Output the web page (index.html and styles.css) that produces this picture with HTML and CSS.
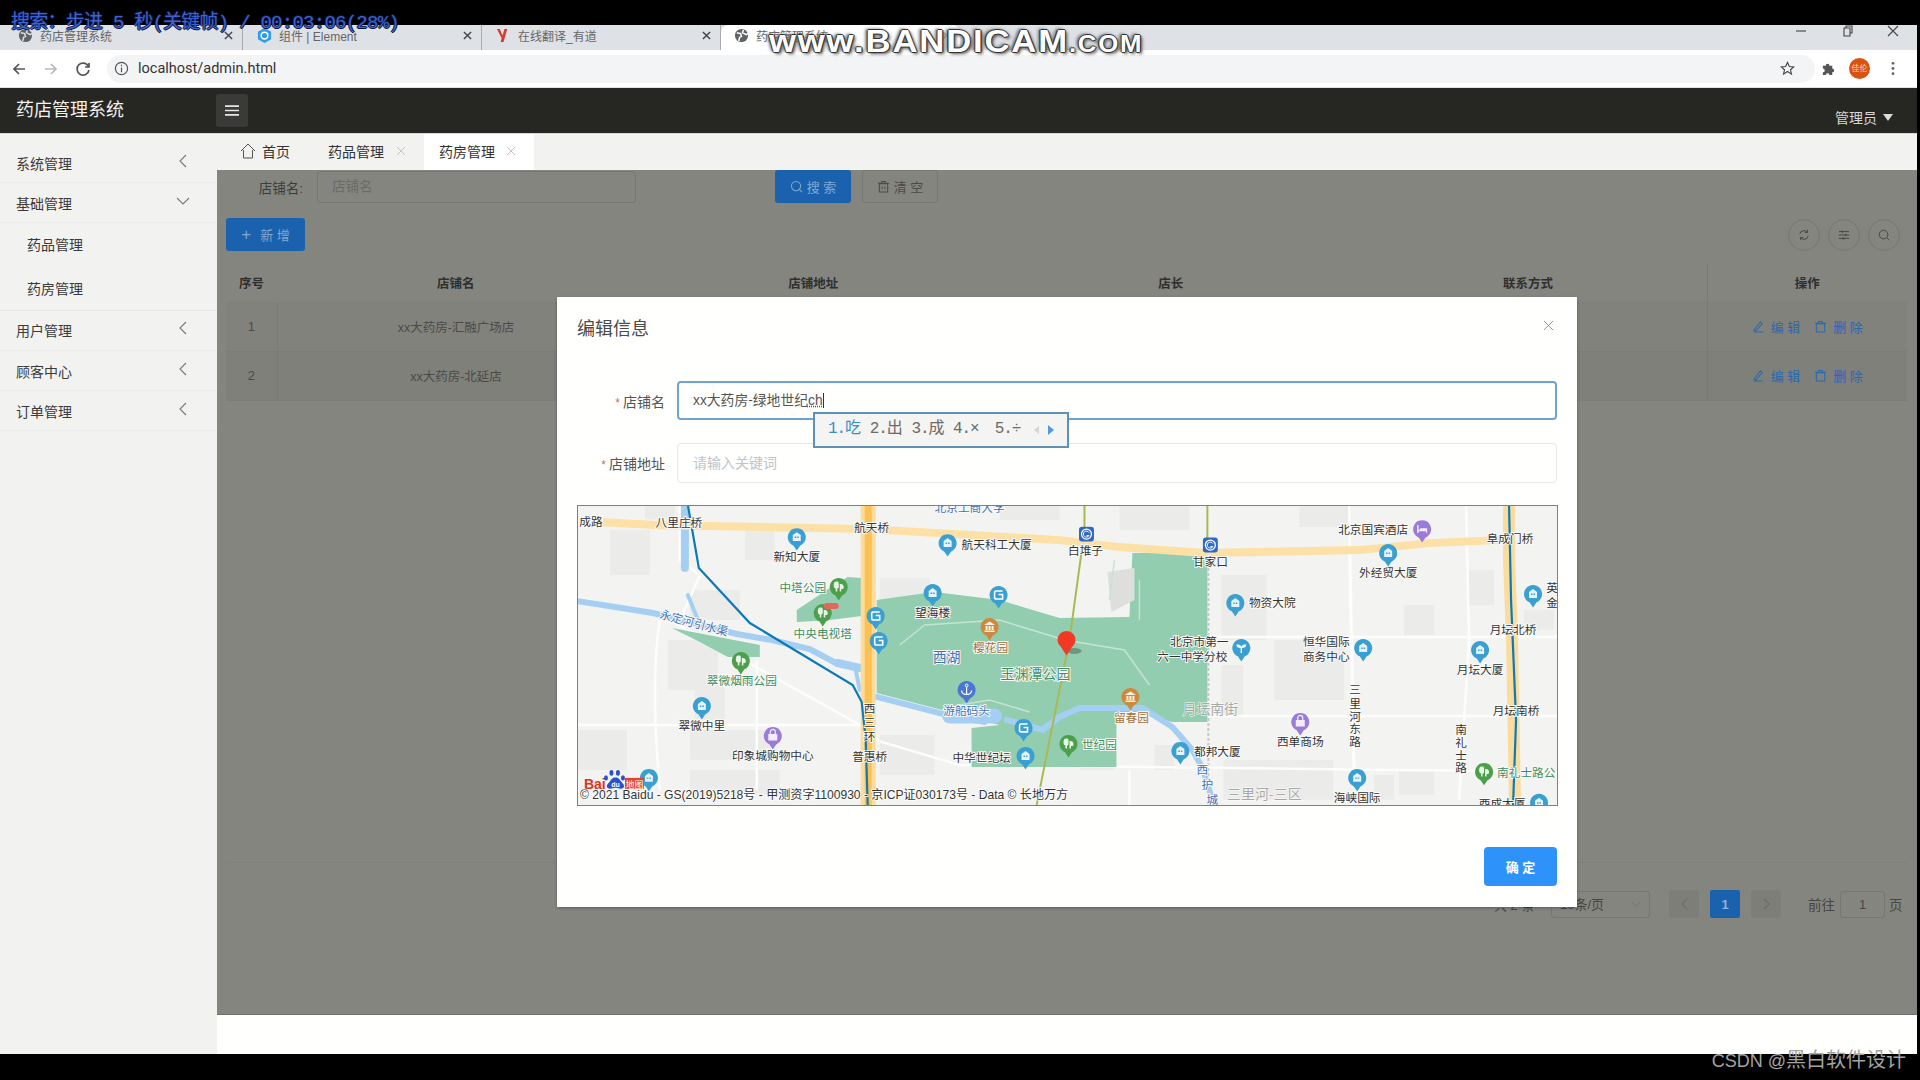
FILE: index.html
```html
<!DOCTYPE html>
<html lang="zh-CN">
<head>
<meta charset="utf-8">
<title>药店管理系统</title>
<link rel="stylesheet" href="styles.css">
</head>
<body>
<div class="osd">搜索：步进 5 秒(关键帧) / 00:03:06(28%)</div>
<div class="watermark">www.BANDICAM<span class="wm-small">.com</span></div>

<div class="window">
  <div class="tabstrip">
    <div class="ctab"><svg class="fav" viewBox="0 0 16 16"><circle cx="8" cy="8" r="7" fill="#5f6368"/><path d="M3 5l4 1 1 3-2 1-1 4M10 2l-1 3 4 2 2-1" fill="none" stroke="#dee1e6" stroke-width="1.6"/></svg><span class="ctab-title">药店管理系统</span><svg class="ctab-x" viewBox="0 0 10 10"><path d="M1 1l8 8M9 1l-8 8"/></svg></div>
    <div class="ctab"><svg class="fav" viewBox="0 0 16 16"><path d="M8 0l7 4v8l-7 4-7-4V4z" fill="#2f9bea"/><circle cx="8" cy="8" r="3.6" fill="none" stroke="#fff" stroke-width="1.6"/></svg><span class="ctab-title">组件 | Element</span><svg class="ctab-x" viewBox="0 0 10 10"><path d="M1 1l8 8M9 1l-8 8"/></svg></div>
    <div class="ctab"><svg class="fav" viewBox="0 0 16 16"><path d="M4 1l3 7 2-7h3L8 15H5l1-4-5-10z" fill="#d83a2e"/></svg><span class="ctab-title">在线翻译_有道</span><svg class="ctab-x" viewBox="0 0 10 10"><path d="M1 1l8 8M9 1l-8 8"/></svg></div>
    <div class="ctab ctab-active"><svg class="fav" viewBox="0 0 16 16"><circle cx="8" cy="8" r="7" fill="#5f6368"/><path d="M3 5l4 1 1 3-2 1-1 4M10 2l-1 3 4 2 2-1" fill="none" stroke="#fff" stroke-width="1.6"/></svg><span class="ctab-title">药店管理系统</span><svg class="ctab-x" viewBox="0 0 10 10"><path d="M1 1l8 8M9 1l-8 8"/></svg></div>
    <div class="winctl">
      <svg viewBox="0 0 12 12"><path d="M1 6h10"/></svg>
      <svg viewBox="0 0 12 12"><path d="M3 3h6v8H3zM5 3V1h6v7H9"/></svg>
      <svg viewBox="0 0 12 12"><path d="M1 1l10 10M11 1L1 11"/></svg>
    </div>
  </div>

  <div class="addrbar">
    <svg class="nav" viewBox="0 0 16 16"><path d="M14 8H3M8 3L3 8l5 5"/></svg>
    <svg class="nav nav-off" viewBox="0 0 16 16"><path d="M2 8h11M8 3l5 5-5 5"/></svg>
    <svg class="nav" viewBox="0 0 16 16"><path d="M13.5 5.5A6 6 0 1 0 14 9M14 2v4h-4"/></svg>
    <div class="omni">
      <svg class="info" viewBox="0 0 16 16"><circle cx="8" cy="8" r="6.5"/><path d="M8 7v5M8 4v1.6"/></svg>
      <span class="url">localhost/admin.html</span>
      <svg class="star" viewBox="0 0 16 16"><path d="M8 1.5l2 4.3 4.6.5-3.4 3.1 1 4.6L8 11.2l-4.2 2.8 1-4.6L1.400 6.300 6 5.800z"/></svg>
    </div>
    <div class="addr-right">
      <svg class="puzzle" viewBox="0 0 16 16"><path d="M2 5h3a2 2 0 1 1 4 0h3v3a2 2 0 1 1 0 4v3H9a2 2 0 1 0-4 0H2v-3a2 2 0 1 0 0-4z"/></svg>
      <div class="avatar">佳伦</div>
      <svg class="dots" viewBox="0 0 4 16"><circle cx="2" cy="2.500" r="1.500"/><circle cx="2" cy="8" r="1.500"/><circle cx="2" cy="13.500" r="1.500"/></svg>
    </div>
  </div>

  <header class="apphead">
    <div class="brand">药店管理系统</div>
    <button class="burger"><svg viewBox="0 0 16 12"><path d="M0 1h16M0 6h16M0 11h16"/></svg></button>
    <div class="user">管理员<span class="caret"></span></div>
  </header>

  <div class="appbody">
    <aside class="sidebar">
      <div class="sb-row"><span>系统管理</span><svg class="chev" viewBox="0 0 8 14"><path d="M7 1L1 7l6 6"/></svg></div>
      <div class="sb-row"><span>基础管理</span><svg class="chev chev-d" viewBox="0 0 14 8"><path d="M1 1l6 6 6-6"/></svg></div>
      <div class="sb-row sb-sub"><span>药品管理</span></div>
      <div class="sb-row sb-sub"><span>药房管理</span></div>
      <div class="sb-row"><span>用户管理</span><svg class="chev" viewBox="0 0 8 14"><path d="M7 1L1 7l6 6"/></svg></div>
      <div class="sb-row"><span>顾客中心</span><svg class="chev" viewBox="0 0 8 14"><path d="M7 1L1 7l6 6"/></svg></div>
      <div class="sb-row"><span>订单管理</span><svg class="chev" viewBox="0 0 8 14"><path d="M7 1L1 7l6 6"/></svg></div>
    </aside>

    <main class="main">
      <nav class="pagetabs">
        <div class="ptab ptab-home"><svg class="home" viewBox="0 0 16 16"><path d="M1 8l7-7 7 7M3.500 7v8h9V7"/></svg>首页</div>
        <div class="ptab">药品管理<svg class="ptab-x" viewBox="0 0 10 10"><path d="M1 1l8 8M9 1l-8 8"/></svg></div>
        <div class="ptab ptab-active">药房管理<svg class="ptab-x" viewBox="0 0 10 10"><path d="M1 1l8 8M9 1l-8 8"/></svg></div>
      </nav>

      <section class="content">
        <form class="searchrow">
          <label class="s-label">店铺名:</label>
          <div class="s-input">店铺名</div>
          <div class="btn btn-primary btn-search"><svg class="ico" viewBox="0 0 14 14"><circle cx="6.500" cy="6.500" r="5"/><path d="M10 10l3 3"/></svg>搜 索</div>
          <div class="btn btn-plain"><svg class="ico" viewBox="0 0 14 14"><path d="M2.500 4h9v9h-9zM1 3.500h12M5 3.500V1.500h4v2M5.500 7v3M8.500 7v3"/></svg>清 空</div>
        </form>

        <div class="toolbar">
          <div class="btn btn-primary btn-add"><span class="plus">+</span>新 增</div>
          <div class="circles">
            <div class="circle"><svg viewBox="0 0 14 14"><path d="M2 6a5 5 0 0 1 9-2M12 8a5 5 0 0 1-9 2M11 1v3H8M3 13v-3h3"/></svg></div>
            <div class="circle"><svg viewBox="0 0 14 14"><path d="M1 3h12M1 7h12M1 11h12M5 1.500v3M9 5.500v3M6 9.500v3"/></svg></div>
            <div class="circle"><svg viewBox="0 0 14 14"><circle cx="6.500" cy="6.500" r="5"/><path d="M10 10l3 3"/></svg></div>
          </div>
        </div>

        <div class="tablewrap">
          <table class="grid">
            <colgroup><col class="c-no"><col class="c-w"><col class="c-w"><col class="c-w"><col class="c-w"><col class="c-op"></colgroup>
            <thead>
              <tr><th>序号</th><th>店铺名</th><th>店铺地址</th><th>店长</th><th>联系方式</th><th class="op">操作</th></tr>
            </thead>
            <tbody>
              <tr><td>1</td><td>xx大药房-汇融广场店</td><td></td><td></td><td></td>
                <td class="op"><span class="link"><svg class="ico" viewBox="0 0 14 14"><path d="M2 11L9 2l2 2-7 8zM2 13h10"/></svg>编 辑</span><span class="link"><svg class="ico" viewBox="0 0 14 14"><path d="M2.500 4h9v9h-9zM1 3.500h12M5 3.500V1.500h4v2"/></svg>删 除</span></td></tr>
              <tr><td>2</td><td>xx大药房-北延店</td><td></td><td></td><td></td>
                <td class="op"><span class="link"><svg class="ico" viewBox="0 0 14 14"><path d="M2 11L9 2l2 2-7 8zM2 13h10"/></svg>编 辑</span><span class="link"><svg class="ico" viewBox="0 0 14 14"><path d="M2.500 4h9v9h-9zM1 3.500h12M5 3.500V1.500h4v2"/></svg>删 除</span></td></tr>
            </tbody>
          </table>
        </div>

        <div class="pager">
          <span class="pg-total">共 2 条</span>
          <div class="pg-size">10条/页<svg class="pg-chev" viewBox="0 0 14 8"><path d="M1 1l6 6 6-6"/></svg></div>
          <div class="pg-btn"><svg viewBox="0 0 8 14"><path d="M7 1L1 7l6 6"/></svg></div>
          <div class="pg-btn pg-on">1</div>
          <div class="pg-btn"><svg viewBox="0 0 8 14"><path d="M1 1l6 6-6 6"/></svg></div>
          <span class="pg-go">前往</span>
          <div class="pg-input">1</div>
          <span class="pg-unit">页</span>
        </div>

        <div class="dialog">
          <div class="dlg-head">
            <span class="dlg-title">编辑信息</span>
            <svg class="dlg-x" viewBox="0 0 12 12"><path d="M1 1l10 10M11 1L1 11"/></svg>
          </div>
          <div class="f-item">
            <label class="f-label"><i class="req">*</i>店铺名</label>
            <div class="f-input f-focus">xx大药房-绿地世纪<u class="compose">ch</u><span class="caretline"></span></div>
            <div class="ime">
              <span class="ime-c ime-first">1.吃</span><span class="ime-c">2.出</span><span class="ime-c">3.成</span><span class="ime-c">4.×</span><span class="ime-c">5.÷</span>
              <i class="ime-l"></i><i class="ime-r"></i>
            </div>
          </div>
          <div class="f-item">
            <label class="f-label"><i class="req">*</i>店铺地址</label>
            <div class="f-input f-ph">请输入关键词</div>
          </div>

          <div class="map">
            <svg class="mapsvg" viewBox="577 505 982 301">
              <defs>
                <symbol id="pb" viewBox="0 0 20 24"><path d="M10 23.500L6.500 18.300A9 9 0 1 1 13.500 18.300Z"/><path d="M6 14V8l4-3 4 3v6z" fill="#e6f3fa"/><path d="M8 9.500h1.500V11H8zM10.500 9.500H12V11h-1.500z" fill="#3a9fd1"/></symbol>
                <symbol id="pm" viewBox="0 0 20 24"><path d="M10 23.500L6.500 18.300A9 9 0 1 1 13.500 18.300Z"/><path d="M14 6H7.500A1.500 1.500 0 0 0 6 7.500v5A1.500 1.500 0 0 0 7.500 14H14v-4.500h-4" fill="none" stroke="#fff" stroke-width="1.600"/></symbol>
                <symbol id="pg" viewBox="0 0 20 24"><path d="M10 23.500L6.500 18.300A9 9 0 1 1 13.500 18.300Z"/><path d="M7.500 4.500c-2 0-2.500 2-2.500 4s1 3 2 3v3h1.500v-3c.5 0 1.500-.5 1.500-1.500V6c0-1-1-1.500-2.500-1.500zM11 7c2 0 4 .5 4 3s-1.500 2-2.500 2v2.500H11z" fill="#e8f5e6"/></symbol>
                <symbol id="ps" viewBox="0 0 20 24"><path d="M10 23.500L6.500 18.300A9 9 0 1 1 13.500 18.300Z"/><path d="M5.500 8h9v6.500h-9z" fill="#f3edfb"/><path d="M7.500 8V6a2.500 2.500 0 0 1 5 0v2" fill="none" stroke="#f3edfb" stroke-width="1.200"/></symbol>
                <symbol id="ph" viewBox="0 0 20 24"><path d="M10 23.500L6.500 18.300A9 9 0 1 1 13.500 18.300Z"/><path d="M5 6v8h1.500v-2h7.500v2H15V9H8v1.500H6.500V6z" fill="#f3edfb"/></symbol>
                <symbol id="pt" viewBox="0 0 20 24"><path d="M10 23.500L6.500 18.300A9 9 0 1 1 13.500 18.300Z"/><path d="M4.500 8L10 4.500 15.500 8zM6 9h2v4H6zM9 9h2v4H9zM12 9h2v4h-2zM5 13.500h10V15H5z" fill="#fdf3e2"/></symbol>
                <symbol id="pa" viewBox="0 0 20 24"><path d="M10 23.500L6.500 18.300A9 9 0 1 1 13.500 18.300Z"/><circle cx="10" cy="5.500" r="1.400" fill="none" stroke="#fff"/><path d="M10 7v7.500M5 10.500c0 2.500 2.500 4 5 4s5-1.500 5-4" fill="none" stroke="#fff" stroke-width="1.200"/></symbol>
                <symbol id="pp" viewBox="0 0 20 24"><path d="M10 23.500L6.500 18.300A9 9 0 1 1 13.500 18.300Z"/><path d="M9.300 15V10C7 10 5 9 5 6.500c3 0 4.500.5 5 2.500.5-2 2-2.500 5-2.500 0 2.500-2 3.500-4.300 3.500v5z" fill="#fff"/></symbol>
                <symbol id="sq" viewBox="0 0 16 16"><rect x=".5" y=".5" width="15" height="15" rx="3" fill="#2f69c4"/><circle cx="8" cy="8" r="5" fill="none" stroke="#fff" stroke-width="1.300"/><path d="M10.500 6.500a3 3 0 1 0 0 3H8" fill="none" stroke="#fff"/></symbol>
              </defs>

              <rect x="577" y="505" width="982" height="301" class="m-bg"/>

              <g class="m-bld">
                <rect x="645" y="505" width="30" height="14"/><rect x="610" y="530" width="40" height="45"/><rect x="745" y="530" width="30" height="30"/><rect x="690" y="590" width="50" height="30"/>
                <rect x="668" y="640" width="50" height="50"/><rect x="695" y="680" width="30" height="40"/><rect x="577" y="730" width="50" height="40"/><rect x="690" y="730" width="80" height="30"/><rect x="690" y="770" width="90" height="25"/>
                <rect x="880" y="578" width="50" height="25"/><rect x="880" y="735" width="55" height="40"/><rect x="1000" y="505" width="60" height="15"/><rect x="1120" y="505" width="70" height="25"/>
                <rect x="1222" y="575" width="45" height="65"/><rect x="1275" y="640" width="70" height="60"/><rect x="1222" y="665" width="22" height="50"/><rect x="1224" y="760" width="110" height="40"/>
                <rect x="1405" y="605" width="30" height="30"/><rect x="1470" y="570" width="25" height="35"/><rect x="1525" y="610" width="30" height="20"/><rect x="1400" y="770" width="35" height="25"/><rect x="1300" y="505" width="50" height="22"/>
                <rect x="1080" y="725" width="35" height="45"/><rect x="1155" y="745" width="20" height="25"/><rect x="1375" y="775" width="20" height="25"/>
              </g>

              <g class="m-road-w">
                <path d="M577 598L660 615 735 655 860 725 875 740 960 765 1559 772"/>
                <path d="M660 620Q650 680 660 790"/><path d="M577 725H860"/><path d="M757 660V790"/>
                <path d="M1207 637H1559"/><path d="M1207 716H1559"/><path d="M1350 505L1355 770"/><path d="M1467 505L1470 640 1460 800"/>
                <path d="M1350 550L1355 780"/><path d="M1130 770V806"/><path d="M680 505V560L700 575 680 620"/>
              </g>

              <path class="m-green" d="M877 600V693L1000 725 972 728V767H1117V712H1143L1172 722 1188 722H1208V553H1133L1130 617 1060 618 1000 600 935 592 905 596Z"/>
              <path class="m-clear" d="M1108 572L1135 568 1135 600 1112 612Z"/>
              <path class="m-green" d="M797 622V610L812 600 830 588 848 577 862 578V616L830 620Z"/>
              <path class="m-green" d="M672 628L760 645V657H728L700 642Z"/>
              <path class="m-path" d="M900 645L925 625 1000 620 1065 640 1125 650 1150 685M960 705L990 700 1030 712M1115 560L1110 600M1140 580V620"/>

              <g class="m-water">
                <path class="w1" d="M685 505V568"/>
                <path class="w2" d="M577 601L653 613 737 634 772 640 810 649 838 664"/>
                <path class="w1" d="M838 663L860 668"/><path class="w3" d="M855 665L860 690"/>
                <path class="w3" d="M688 595L700 625 712 630"/>
                <path class="w2" d="M877 697L943 714 985 722"/><path class="w4" d="M950 716H995"/>
                <path class="w2" d="M1007 720L1043 730 1060 717 1080 708 1143 708 1173 727 1193 750 1203 768 1215 806"/>
              </g>

              <g class="m-hway">
                <path class="h1" d="M603 522L660 525 870 529 1060 540 1120 547 1205 553 1360 550 1430 543 1500 540"/>
                <path class="h2" d="M868.500 505V806"/>
                <path class="h3" d="M1510 505V560L1513 640 1516 806"/>
              </g>
              <path class="h4" d="M868.500 505V806"/>

              <g class="m-metro">
                <path d="M688 505L699 568 750 623 853 685 862 702 866 740 868 806"/>
                <path d="M1510 505L1512 600 1517 720 1514 806"/>
              </g>
              <g class="m-line">
                <path d="M1085 505V535M1083 545L1070 640 1037 806"/><path d="M1208 505V545"/>
              </g>
              <path class="m-dash" d="M1209 558V806"/>

              <g class="lb">
                <text x="591" y="526">成路</text><text x="679" y="527">八里庄桥</text><text x="872" y="532">航天桥</text>
                <text x="797" y="561">新知大厦</text><text x="997" y="549">航天科工大厦</text><text x="933" y="617">望海楼</text>
                <text x="702" y="730">翠微中里</text><text x="773" y="760">印象城购物中心</text><text x="870" y="761">普惠桥</text><text x="982" y="762">中华世纪坛</text>
                <text x="870" y="713">西</text><text x="870" y="727">三</text><text x="870" y="741">环</text>
                <text x="1086" y="555">白堆子</text><text x="1211" y="566">甘家口</text><text x="1374" y="534">北京国宾酒店</text><text x="1511" y="543">阜成门桥</text>
                <text x="1389" y="577">外经贸大厦</text><text x="1273" y="607">物资大院</text><text x="1553" y="592">英</text><text x="1553" y="607">金</text>
                <text x="1514" y="634">月坛北桥</text><text x="1200" y="646">北京市第一</text><text x="1193" y="661">六一中学分校</text>
                <text x="1327" y="646">恒华国际</text><text x="1327" y="661">商务中心</text><text x="1481" y="674">月坛大厦</text>
                <text x="1517" y="715">月坛南桥</text><text x="1301" y="746">西单商场</text><text x="1218" y="756">都邦大厦</text><text x="1358" y="802">海峡国际</text><text x="1503" y="808">西成大厦</text>
                <text x="1356" y="694">三</text><text x="1356" y="708">里</text><text x="1356" y="721">河</text><text x="1356" y="733">东</text><text x="1356" y="746">路</text>
                <text x="1462" y="734">南</text><text x="1462" y="747">礼</text><text x="1462" y="760">士</text><text x="1462" y="772">路</text>
              </g>
              <g class="lb lb-g">
                <text x="803" y="592">中塔公园</text><text x="823" y="638">中央电视塔</text><text x="742" y="685">翠微烟雨公园</text>
                <text x="1100" y="749">世纪园</text><text class="lb-start" x="1498" y="777">南礼士路公</text>
              </g>
              <g class="lb lb-big lb-g"><text x="1036" y="679">玉渊潭公园</text></g>
              <g class="lb lb-o"><text x="991" y="652">樱花园</text><text x="1132" y="722">留春园</text></g>
              <g class="lb lb-b">
                <text x="967" y="715">游船码头</text><text x="970" y="512">北京工商大学</text>
                <text transform="translate(693 627) rotate(15)">永定河引水渠</text>
                <text x="1203" y="774">西</text><text x="1208" y="789">护</text><text x="1213" y="804">城</text>
              </g>
              <g class="lb lb-big lb-b"><text x="947" y="662">西湖</text></g>
              <g class="lb lb-big lb-q"><text x="1211" y="714">月坛南街</text><text x="1265" y="799">三里河-三区</text></g>

              <g class="pins">
                <use href="#pb" class="p-blue" x="787" y="527" width="20" height="24"/>
                <use href="#pb" class="p-blue" x="938" y="533" width="20" height="24"/>
                <use href="#pb" class="p-blue" x="923" y="583" width="20" height="24"/>
                <use href="#pb" class="p-blue" x="692" y="696" width="20" height="24"/>
                <use href="#pb" class="p-blue" x="639" y="768" width="20" height="24"/>
                <use href="#pm" class="p-blue" x="989" y="585" width="20" height="24"/>
                <use href="#pm" class="p-blue" x="866" y="606" width="20" height="24"/>
                <use href="#pm" class="p-blue" x="869" y="631" width="20" height="24"/>
                <use href="#pm" class="p-blue" x="1014" y="718" width="20" height="24"/>
                <use href="#pb" class="p-blue" x="1016" y="746" width="20" height="24"/>
                <use href="#pg" class="p-green" x="829" y="577" width="20" height="24"/>
                <use href="#pg" class="p-green" x="813" y="603" width="20" height="24"/>
                <use href="#pg" class="p-green" x="731" y="651" width="20" height="24"/>
                <use href="#pg" class="p-green" x="1059" y="734" width="20" height="24"/>
                <use href="#pg" class="p-green" x="1475" y="762" width="20" height="24"/>
                <use href="#pt" class="p-orange" x="980" y="617" width="20" height="24"/>
                <use href="#pt" class="p-orange" x="1121" y="687" width="20" height="24"/>
                <use href="#pa" class="p-indigo" x="957" y="680" width="20" height="24"/>
                <use href="#ps" class="p-purple" x="763" y="726" width="20" height="24"/>
                <use href="#ps" class="p-purple" x="1291" y="712" width="20" height="24"/>
                <use href="#ph" class="p-purple" x="1413" y="519" width="20" height="24"/>
                <use href="#pb" class="p-blue" x="1379" y="543" width="20" height="24"/>
                <use href="#pb" class="p-blue" x="1226" y="593" width="20" height="24"/>
                <use href="#pb" class="p-blue" x="1524" y="584" width="20" height="24"/>
                <use href="#pp" class="p-blue" x="1232" y="638" width="20" height="24"/>
                <use href="#pb" class="p-blue" x="1354" y="638" width="20" height="24"/>
                <use href="#pb" class="p-blue" x="1471" y="640" width="20" height="24"/>
                <use href="#pb" class="p-blue" x="1171" y="741" width="20" height="24"/>
                <use href="#pb" class="p-blue" x="1348" y="768" width="20" height="24"/>
                <use href="#pb" class="p-blue" x="1530" y="793" width="20" height="24"/>
                <use href="#sq" x="1079" y="526" width="16" height="16"/>
                <use href="#sq" x="1203" y="537" width="16" height="16"/>
              </g>
              <rect x="824" y="603" width="15" height="6" rx="3" class="m-badge"/>

              <ellipse cx="1075" cy="651" rx="7" ry="3" class="m-shadow"/>
              <path class="m-marker" d="M1067 655.500L1061.500 647A9 9 0 1 1 1072.500 647Z"/>

              <g class="logo">
                <text class="logo-bai" x="584" y="789">Bai</text>
                <path class="logo-paw" d="M610 789c-3 0-4-3-2-5l4-5c2-2 5-2 7 0l4 5c2 2 1 5-2 5-2 0-3-1-5.500-1s-3.500 1-5.500 1z"/>
                <ellipse class="logo-paw" cx="606" cy="778" rx="2" ry="2.600"/><ellipse class="logo-paw" cx="611.500" cy="773" rx="2" ry="2.800"/><ellipse class="logo-paw" cx="618" cy="773" rx="2" ry="2.800"/><ellipse class="logo-paw" cx="623" cy="778" rx="2" ry="2.600"/>
                <text class="logo-du" x="615.500" y="787">du</text>
                <rect class="logo-box" x="625" y="778" width="19" height="11"/>
                <text class="logo-map" x="634.500" y="788">地图</text>
              </g>
              <text class="copy" x="580" y="799">© 2021 Baidu - GS(2019)5218号 - 甲测资字1100930 - 京ICP证030173号 - Data © 长地万方</text>
            </svg>
          </div>

          <div class="dlg-foot"><div class="btn-ok">确 定</div></div>
        </div>
      </section>
      <div class="mainfoot"></div>
    </main>
  </div>
</div>

<footer class="bottom"><span class="csdn">CSDN @<span class="csdn-cn">黑白软件设计</span></span></footer>
</body>
</html>
```

FILE: styles.css
```css
* { box-sizing: border-box; }
html, body { margin: 0; padding: 0; }
body {
  width: 1920px; height: 1080px; overflow: hidden; background: #000;
  padding-top: 25px; display: flex; flex-direction: column; position: relative;
  font-family: "Liberation Sans", "Noto Sans CJK SC", sans-serif; color: #333;
}
svg { display: block; fill: none; }

/* recorder overlays */
.osd {
  position: absolute; left: 11px; top: 10px; z-index: 10; font-size: 19px; line-height: 26px; letter-spacing: -.75px;
  font-family: "Liberation Mono", "Noto Sans CJK SC", monospace; color: #3f63cc; white-space: pre;
  text-shadow: 1px 0 #0a1440, -1px 0 #0a1440, 0 1px #0a1440, 0 -1px #0a1440;
}
.watermark {
  position: absolute; left: 769px; top: 22px; z-index: 10; font-size: 31px; line-height: 38px; font-weight: 700;
  letter-spacing: 1.6px; color: #fff; white-space: nowrap; transform: scaleX(1.12); transform-origin: left center;
  text-shadow: 1px 0 #333, -1px 0 #333, 0 1px #333, 0 -1px #333, 2px 2px 3px #555, -2px -1px 3px #666;
}
.wm-small { font-variant-caps: all-small-caps; font-size: 33px; }

.window { width: 1917px; flex: 1; display: flex; flex-direction: column; min-height: 0; background: #fff; }

/* browser chrome */
.tabstrip { height: 25px; background: #dee1e6; display: flex; flex: none; }
.ctab { width: 239px; display: flex; align-items: center; padding: 0 9px 5px 14px; position: relative; font-size: 12px; color: #666; border-right: 1px solid #a9acb0; }
.ctab:first-child { width: 243px; padding-left: 18px; }
.ctab-active { background: #fff; border-radius: 8px 8px 0 0; border-right: 0; padding-left: 13px; }
.fav { width: 15px; height: 15px; flex: none; }
.ctab-title { margin-left: 7px; flex: 1; white-space: nowrap; }
.ctab-x { width: 9px; height: 9px; stroke: #444; stroke-width: 1.6; flex: none; }
.ctab-active .ctab-x { stroke: #bbb; }
.winctl { margin-left: auto; display: flex; gap: 34px; padding: 0 18px 13px 0; align-items: center; }
.winctl svg { width: 12px; height: 12px; stroke: #444; stroke-width: 1.1; }

.addrbar { height: 38px; background: #fff; display: flex; align-items: center; padding: 0 12px 0 11px; flex: none; border-bottom: 1px solid #e2e2e2; }
.nav { width: 16px; height: 16px; stroke: #555; stroke-width: 1.7; margin-right: 16px; flex: none; }
.nav-off { stroke: #b7b9bc; }
.omni { width: 1708px; height: 28px; margin-left: 0; margin-right: 12px; background: #f3f4f5; border-radius: 14px; display: flex; align-items: center; padding: 0 20px 0 7px; flex: none; }
.info { width: 15px; height: 15px; stroke: #555; stroke-width: 1.3; }
.url { margin-left: 9px; font-size: 14.500px; color: #333; flex: 1; font-family: "Roboto", "Liberation Sans", sans-serif; }
.star { width: 15px; height: 15px; stroke: #444; stroke-width: 1.2; }
.addr-right { display: flex; align-items: center; margin-left: -6px; }
.puzzle { width: 15px; height: 15px; fill: #555; }
.avatar { width: 21px; height: 21px; margin-left: 13px; border-radius: 50%; background: #d9530f; color: #f7d9c0; font-size: 8px; line-height: 21px; text-align: center; }
.dots { width: 4px; height: 15px; fill: #666; margin-left: 21px; }

/* app header */
.apphead { height: 46px; background: #262622; display: flex; align-items: center; padding: 0 24px 0 16px; flex: none; border-bottom: 1px solid #d8d8d4; }
.brand { font-size: 18px; color: #f2f2f0; width: 200px; margin-top: -5px; }
.burger { width: 32px; height: 33px; background: #3a3a38; border: 0; border-radius: 3px; padding: 0 9px; display: flex; align-items: center; }
.burger svg { width: 14px; height: 11px; stroke: #e8e8e6; stroke-width: 1.8; }
.user { margin-left: auto; margin-top: 13px; font-size: 14px; color: #d8d8d6; display: flex; align-items: center; }
.caret { width: 0; height: 0; border: 5.500px solid transparent; border-top: 7px solid #dcdcda; border-bottom: 0; margin-left: 6px; }

/* body */
.appbody { flex: 1; display: flex; min-height: 0; }
.sidebar { width: 217px; flex: none; background: #f2f2f0; padding-top: 9px; font-size: 14px; color: #3a3a3a; }
.sb-row { height: 40px; display: flex; align-items: center; justify-content: space-between; padding: 0 30px 0 16px; border-bottom: 1px solid #eaeae8; }
.sb-sub { height: 44px; padding-left: 27px; padding-bottom: 2px; border-bottom: 1px solid transparent; }
.sb-sub + .sb-row { padding-bottom: 1px; }
.sb-row:nth-child(4) { border-bottom-color: #e6e6e4; }
.chev { width: 8px; height: 14px; stroke: #777; stroke-width: 1.1; margin-top: -4px; }
.chev-d { width: 14px; height: 8px; margin-right: -3px; }

.main { flex: 1; display: flex; flex-direction: column; min-width: 0; }
.pagetabs { height: 36px; background: #f2f2f0; display: flex; flex: none; font-size: 14px; color: #333; padding-left: 8px; }
.ptab { display: flex; align-items: center; padding: 0 15px 2px; height: 36px; }
.ptab-home { padding-left: 15px; padding-right: 23px; }
.home { width: 16px; height: 16px; stroke: #555; stroke-width: 1; margin-right: 6px; }
.ptab-x { width: 10px; height: 10px; stroke: #c4c4c2; stroke-width: 1; margin-left: 12px; }
.ptab-active { background: #fff; margin-left: 3px; height: 37px; padding-right: 18px; border-bottom: 1px solid #eee; }
.ptab-active .ptab-x { margin-left: 11px; }

.content { flex: 1; background: #858580; padding: 0 10px 0 9px; position: relative; display: flex; flex-direction: column; min-height: 0; }
.searchrow { display: flex; align-items: center; margin: 0; height: 33px; flex: none; }
.s-label { width: 77px; text-align: right; font-size: 13.500px; color: #3c3c3a; margin-right: 14px; }
.s-input { width: 319px; height: 32px; border: 1px solid #777772; border-radius: 3px; padding: 0 14px; font-size: 13.500px; line-height: 30px; color: #6a6a66; margin-right: 139px; }
.btn { display: flex; align-items: center; justify-content: center; height: 33px; width: 76px; border-radius: 3px; font-size: 13px; }
.btn-primary { background: #1a62ad; color: #7fa8d2; }
.btn-plain { border: 1px solid #777772; color: #4a4a47; margin-left: 11px; }
.ico { width: 13px; height: 13px; stroke: currentColor; stroke-width: 1.1; margin-right: 4px; flex: none; }
.toolbar { display: flex; align-items: center; justify-content: space-between; height: 33px; margin: 15px 7px 13px 0; flex: none; }
.btn-add { width: 79px; }
.plus { font-size: 17px; margin-right: 9px; font-weight: 300; line-height: 1; }
.circles { display: flex; gap: 8px; }
.circle { width: 32px; height: 32px; border: 1px solid #777772; border-radius: 50%; display: flex; align-items: center; justify-content: center; }
.circle svg { width: 12px; height: 12px; stroke: #444441; stroke-width: 1.100; }

.tablewrap { height: 599px; flex: none; border-bottom: 1px solid #80807b; }
.grid { width: 100%; table-layout: fixed; border-collapse: collapse; font-size: 12.500px; color: #4a4a47; }
.c-no { width: 51px; }
.c-w { width: 357.500px; }
.c-op { width: 200px; }
.grid th { height: 38px; font-weight: 700; color: #2f2f2d; border-bottom: 1px solid #80807b; padding: 0; }
.grid td { height: 49px; text-align: center; border-bottom: 1px solid #7d7d78; padding: 0; }
.grid tbody tr:first-child td { background: #82827d; }
.grid tbody tr:last-child td { background: #80807b; }
.grid td:first-child { border-right: 1px solid #7a7a75; font-size: 13px; }
.grid .op { border-left: 1px solid #7a7a75; }
.link { display: inline-flex; align-items: center; color: #2a68ad; margin: 0 7px; font-size: 13px; }
.link .ico { margin-right: 6px; }

.pager { display: flex; align-items: center; height: 28px; margin-top: 27px; flex: none; font-size: 13px; color: #46463f; padding-left: 1268px; }
.pg-total { width: 57px; }
.pg-size { width: 99px; height: 27px; border: 1px solid #777772; border-radius: 3px; padding: 0 8px; line-height: 25px; display: flex; align-items: center; justify-content: space-between; }
.pg-chev { width: 10px; height: 6px; stroke: #6e6e6a; }
.pg-btn { width: 30px; height: 28px; background: #7e7e79; border-radius: 2px; margin-left: 11px; display: flex; align-items: center; justify-content: center; font-weight: 700; }
.pg-btn svg { width: 7px; height: 12px; stroke: #6a6a66; stroke-width: 1.200; }
.pg-btn:nth-of-type(2) { margin-left: 19px; }
.pg-on { background: #1a62ad; color: #8fb4da; }
.pg-go { margin-left: 27px; font-size: 13.500px; }
.pg-input { width: 45px; height: 27px; border: 1px solid #777772; border-radius: 3px; margin-left: 5px; text-align: center; line-height: 25px; }
.pg-unit { margin-left: 4px; font-size: 13.500px; }
.mainfoot { height: 40px; background: #fffffd; flex: none; border-top: 1px solid #6f6f6b; }

/* dialog */
.dialog { position: absolute; left: 340px; top: 127px; width: 1020px; height: 610px; background: #fffffd; padding: 0 20px; box-shadow: 0 1px 3px rgba(0,0,0,.3); }
.dlg-head { height: 62px; display: flex; align-items: center; justify-content: space-between; margin-bottom: 22px; }
.dlg-title { font-size: 18px; color: #4a4a48; margin-top: -2px; }
.dlg-x { width: 11px; height: 11px; stroke: #8c8c8a; stroke-width: 1; margin-right: 3px; margin-top: -6px; }
.f-item { display: flex; align-items: center; margin-bottom: 22px; position: relative; }
.f-label { width: 88px; text-align: right; font-size: 14px; color: #555; flex: none; margin-right: 12px; white-space: nowrap; }
.req { color: #e0665f; font-style: normal; margin-right: 3px; font-size: 12px; }
.f-input { flex: 1; height: 40px; border: 1px solid #e6e6e4; border-radius: 4px; padding: 0 15px; font-size: 13.800px; line-height: 38px; color: #555; }
.f-focus { border: 2px solid #6fa3cf; line-height: 36px; padding-left: 14px; height: 39px; margin-bottom: 1px; }
.f-ph { color: #c0c4c8; font-size: 14px; }
.compose { text-decoration: underline dotted; }
.caretline { display: inline-block; width: 1px; height: 15px; background: #333; vertical-align: -3px; }

.ime {
  position: absolute; left: 236px; top: 31px; width: 256px; height: 36px; z-index: 3; background: #f4f4f2;
  border: 2px solid #5f91b6; display: flex; align-items: baseline; padding: 5px 0 0 13px;
  font-family: "Liberation Mono", "Noto Sans CJK SC", monospace; color: #6a6a68;
}
.ime-c { width: 41.700px; flex: none; white-space: nowrap; font-size: 16px; line-height: 20px; letter-spacing: -1.100px; }
.ime-first { color: #3a8fc2; }
.ime-l { width: 0; height: 0; border: 4px solid transparent; border-right: 5px solid #d6d6d4; border-left: 0; margin-left: -2px; align-self: center; margin-top: -5px; }
.ime-r { width: 0; height: 0; border: 5px solid transparent; border-left: 6px solid #4f9be0; border-right: 0; margin-left: 9px; align-self: center; margin-top: -5px; }

.map { height: 301px; margin-right: -1px; position: relative; outline: 1.500px solid #b9695d; outline-offset: -1.500px; }
.mapsvg { width: 100%; height: 100%; font-family: "Noto Sans CJK SC", sans-serif; }
.m-bg { fill: #f3f3f1; }
.m-bld rect { fill: #ebebe9; }
.m-road-w path { stroke: #fdfdfc; stroke-width: 2.500; fill: none; }
.m-green { fill: #92cdb0; }
.m-clear { fill: #dcdfdb; }
.m-path { stroke: #c6e3d3; stroke-width: 1.500; fill: none; }
.m-water path { fill: none; stroke: #a5cff2; stroke-linecap: round; }
.m-water .w1 { stroke-width: 8px; }
.m-water .w2 { stroke-width: 6px; }
.m-water .w3 { stroke-width: 4px; }
.m-water .w4 { stroke-width: 15px; }
.m-hway path { fill: none; }
.h1 { stroke: #fce0a6; stroke-width: 8px; }
.h2 { stroke: #fbdc9c; stroke-width: 15px; }
.h3 { stroke: #fbdc9c; stroke-width: 12px; }
.h4 { stroke: #fdc153; stroke-width: 7px; fill: none; }
.m-metro path { stroke: #0c7ab8; stroke-width: 2.200; fill: none; }
.m-line path { stroke: #a9b954; stroke-width: 2px; fill: none; }
.m-dash { stroke: #c4c8c6; stroke-width: 2px; stroke-dasharray: 3 2; fill: none; }

.lb text { font-size: 11.700px; text-anchor: middle; fill: #333; paint-order: stroke; stroke: #fbfbfa; stroke-width: 1.800px; }
.lb .lb-start { text-anchor: start; }
.lb-g text { fill: #3f8d5e; }
.lb-o text { fill: #a2703c; }
.lb-b text { fill: #3f72b8; }
.lb-q text { fill: #a8a8a6; stroke-width: 1px; }
.lb-big text { font-size: 14px; }
.p-blue { fill: #3a9fd1; }
.p-green { fill: #4ca04c; }
.p-orange { fill: #cc8a3e; }
.p-indigo { fill: #4a78d0; }
.p-purple { fill: #9a7bd8; }
.m-badge { fill: #e2685e; }
.m-shadow { fill: rgba(50,70,60,.4); }
.m-marker { fill: #f03a25; }
.logo-bai { font: 700 14px "Liberation Sans", sans-serif; fill: #e0321c; }
.logo-paw { fill: #2a4fd0; }
.logo-du { font: 700 7px "Liberation Sans", sans-serif; fill: #fff; text-anchor: middle; }
.logo-box { fill: #e2452f; }
.logo-map { font-size: 9px; fill: #fff; text-anchor: middle; }
.copy { font: 12.100px "Liberation Sans", "Noto Sans CJK SC", sans-serif; fill: #333; paint-order: stroke; stroke: #fff; stroke-width: 1.500px; }

.dlg-foot { display: flex; justify-content: flex-end; margin-top: 41px; }
.btn-ok { width: 73px; height: 39px; background: #2d93fb; border-radius: 4px; color: #fff; font-size: 13px; font-weight: 700; display: flex; align-items: center; justify-content: center; }

.bottom { height: 26px; flex: none; display: flex; justify-content: flex-end; padding-right: 14px; }
.csdn { font-size: 18px; line-height: 22px; margin-top: -5px; color: #a4a4a4; position: relative; z-index: 2; }
.csdn-cn { font-size: 20px; }
```
